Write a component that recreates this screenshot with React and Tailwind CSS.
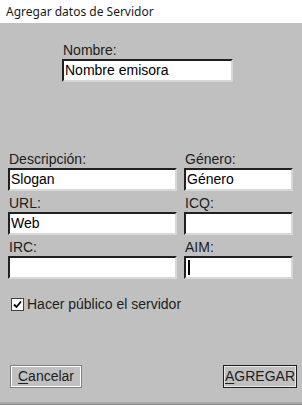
import React from 'react';

const Field = ({ label, value, className = '', cursor = false }) => (
  <div className={`flex flex-col ${className}`}>
    <span className="h-[17px] leading-[17px] pl-[1px] text-[14px] text-[#202020]">{label}</span>
    <div className="h-[23px] border-t-2 border-l-2 border-t-[#202020] border-l-[#202020] border-r-2 border-b-2 border-r-[#d8d8d8] border-b-[#d8d8d8] bg-white flex items-center pl-[1px] text-[14px] text-black">
      {cursor ? <span className="w-[2px] h-[15px] bg-black ml-[1px]" /> : value}
    </div>
  </div>
);

const App = () => {
  return (
    <div className="w-[302px] h-[405px] bg-[#c0c0c0] flex flex-col font-['Liberation_Sans',Arial,sans-serif] overflow-hidden">
      <div className="h-[23px] bg-white flex items-center pl-[6px] text-[12px] text-[#1a1a1a] font-['Noto_Sans',sans-serif]">
        Agregar datos de Servidor
      </div>

      <div className="flex flex-col px-[8px] pt-[19px]">
        <Field label="Nombre:" value="Nombre emisora" className="ml-[54px] w-[171px]" />

        <div className="grid grid-cols-[169px_109px] gap-x-[7px] gap-y-[4px] mt-[69px]">
          <Field label="Descripción:" value="Slogan" />
          <Field label="Género:" value="Género" />
          <Field label="URL:" value="Web" />
          <Field label="ICQ:" value="" />
          <Field label="IRC:" value="" />
          <Field label="AIM:" value="" cursor />
        </div>

        <label className="flex items-center mt-[15px] ml-[3px] text-[14px] text-[#202020]">
          <span className="w-[13px] h-[13px] bg-white border border-[#404040] flex items-center justify-center mr-[3px]">
            <svg width="9" height="9" viewBox="0 0 9 9">
              <path d="M1 4.5 L3.5 7 L8 1.5" fill="none" stroke="black" strokeWidth="1.8" />
            </svg>
          </span>
          Hacer público el servidor
        </label>
      </div>

      <div className="flex justify-between pl-[10px] pr-[5px] mt-[50px]">
        <button className="w-[72px] h-[23px] border border-[#808080] bg-[#c0c0c0] p-0">
          <span className="flex items-center justify-center w-full h-full border border-white text-[14px] text-[#202020]">
            <span className="underline underline-offset-2">C</span>ancelar
          </span>
        </button>
        <button className="w-[74px] h-[23px] border border-[#202020] bg-[#c0c0c0] p-0">
          <span className="flex items-center justify-center w-full h-full border border-[#e8e8e8] text-[14px] text-[#202020]">
            <span className="underline underline-offset-2">A</span>GREGAR
          </span>
        </button>
      </div>

      <div className="mt-auto h-[3px] bg-[#a8a8a8] border-b border-[#8a8a8a]" />
    </div>
  );
};

export default App;
